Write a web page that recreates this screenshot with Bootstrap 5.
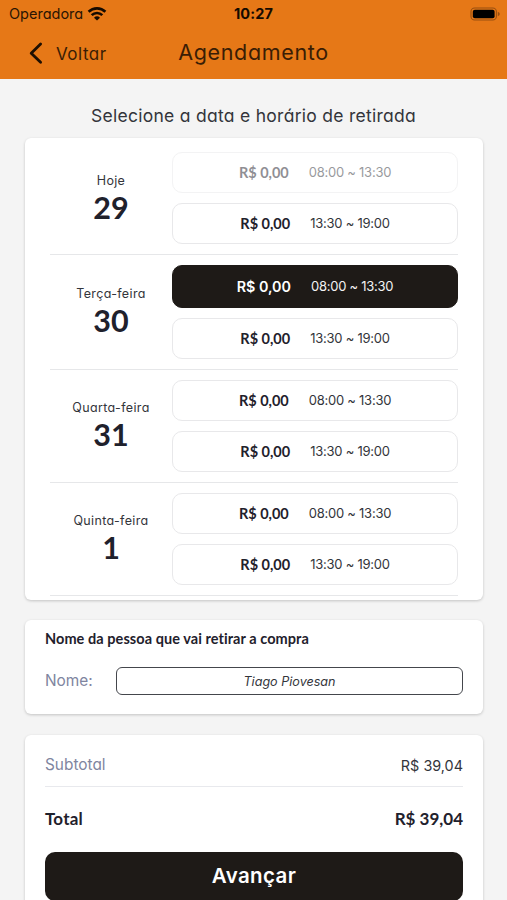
<!DOCTYPE html>
<html lang="pt-BR">
<head>
<meta charset="utf-8">
<meta name="viewport" content="width=device-width, initial-scale=1">
<title>Agendamento</title>
<link href="https://cdn.jsdelivr.net/npm/bootstrap@5.3.0/dist/css/bootstrap.min.css" rel="stylesheet">
<style>
  body { background: #f4f4f4; font-family: Inter, sans-serif; font-feature-settings: "cv11"; color: #33353b; height: 900px; overflow: hidden; line-height: 1.2; }
  .lato { font-family: Lato, sans-serif; font-weight: 700; color: #1f212c; }
  .topbar { background: #e67817; height: 79px; color: #3a1d05; }
  .statusbar { height: 28px; padding: 0 7px 0 9px; color: #2a1503; }
  .carrier { font-size: 14.5px; letter-spacing: 0; }
  .clock { font-size: 14.5px; font-weight: 700; color: #150a00; letter-spacing: .15px; }
  .navrow { height: 51px; padding-left: 28px; }
  .back-label { font-size: 17px; letter-spacing: .5px; padding-top: 1px; margin-left: 13px; }
  .screen-title { font-size: 21.5px; letter-spacing: .65px; margin-top: -1px; }
  .prompt { font-size: 17.5px; letter-spacing: .28px; height: 59px; padding-top: 26px; }
  .panel { background: #fff; border-radius: 6px; box-shadow: 0 1px 3px rgba(0,0,0,.2); margin: 0 24px 0 25px; }
  .schedule { height: 462px; padding: 4px 25px 0; }
  .day { border-bottom: 1.5px solid #e6e7e9; padding: 10px 0; }
  .day-name { width: 122px; }
  .weekday { font-size: 12.5px; letter-spacing: .35px; padding-top: 1px; }
  .daynum { font-size: 30.5px; line-height: 36px; margin-top: 1px; }
  .slots { row-gap: 10px; }
  .slot { height: 41px; border: 1.5px solid #e8e8ea; border-radius: 10px; gap: 20px; }
  .slot .lato { font-size: 14.5px; }
  .hours { font-size: 13px; letter-spacing: -.25px; }
  .slot.off { opacity: .5; }
  .slot.on { height: 42.8px; background: #1e1a17; border-color: #1e1a17; color: #f3f3f3; }
  .price-on { font-size: 14.3px; font-weight: 600; color: #fff; }
  .pickup { height: 94px; padding: 0 20px; margin-top: 20px; }
  .pickup-title { font-size: 14.5px; padding-top: 10px; letter-spacing: .06px; }
  .field-label { color: #7f85a0; font-size: 15.4px; }
  .name-field { height: 28px; width: 347px; border: 1.5px solid #44464c; border-radius: 6px; font-size: 12.6px; font-style: italic; }
  .summary { height: 185px; padding: 0 20px; margin-top: 21px; }
  .subtotal { height: 51.5px; padding-top: 10px; border-bottom: 1.5px solid #e8e9ed; }
  .amount { font-size: 14.4px; }
  .total { height: 65px; font-size: 17px; }
  .total span:first-child { letter-spacing: .2px; }
  .advance { height: 49px; background: #1e1a17; color: #fff; border-radius: 10px; font-size: 20.5px; font-weight: 600; letter-spacing: .4px; }
</style>
</head>
<body>
<header class="topbar">
  <div class="statusbar d-flex align-items-center justify-content-between position-relative">
    <div class="d-flex align-items-center gap-1">
      <span class="carrier">Operadora</span>
      <svg width="20" height="14" viewBox="0 0 20 14" fill="none" stroke="#150a00" stroke-width="2.6"><path d="M1.6 4.8a12 12 0 0 1 16.8 0M4.7 8.2a7.5 7.5 0 0 1 10.6 0"/><path d="M10 13.6 7 10.7a4.3 4.3 0 0 1 6 0z" fill="#150a00" stroke="none"/></svg>
    </div>
    <span class="clock position-absolute start-50 translate-middle-x">10:27</span>
    <svg width="31" height="14" viewBox="0 0 31 14"><rect x="2" y="1" width="25.4" height="12" rx="3.6" fill="none" stroke="#984f10" stroke-width="1.1"/><rect x="3.8" y="2.8" width="21.8" height="8.4" rx="2" fill="#000"/><path d="M28.8 4.8q2 .7 2 2.2t-2 2.2z" fill="#984f10"/></svg>
  </div>
  <div class="navrow d-flex align-items-center position-relative">
    <svg width="15" height="23" viewBox="0 0 15 23" fill="none" stroke="#1e0f02" stroke-width="2.8" stroke-linecap="round" stroke-linejoin="round"><path d="M12.6 2 3.2 11.2l9.4 9.1"/></svg>
    <span class="back-label">Voltar</span>
    <span class="screen-title position-absolute start-50 translate-middle-x">Agendamento</span>
  </div>
</header>
<main>
  <p class="prompt text-center m-0">Selecione a data e horário de retirada</p>
  <section class="panel schedule">
    <div class="day d-flex align-items-center">
      <div class="day-name text-center"><div class="weekday">Hoje</div><div class="daynum lato">29</div></div>
      <div class="flex-fill d-grid slots">
        <div class="slot off d-flex align-items-center justify-content-center"><span class="lato">R$ 0,00</span><span class="hours">08:00 ~ 13:30</span></div>
        <div class="slot d-flex align-items-center justify-content-center"><span class="lato">R$ 0,00</span><span class="hours">13:30 ~ 19:00</span></div>
      </div>
    </div>
    <div class="day d-flex align-items-center">
      <div class="day-name text-center"><div class="weekday">Terça-feira</div><div class="daynum lato">30</div></div>
      <div class="flex-fill d-grid slots">
        <div class="slot on d-flex align-items-center justify-content-center"><span class="price-on">R$ 0,00</span><span class="hours">08:00 ~ 13:30</span></div>
        <div class="slot d-flex align-items-center justify-content-center"><span class="lato">R$ 0,00</span><span class="hours">13:30 ~ 19:00</span></div>
      </div>
    </div>
    <div class="day d-flex align-items-center">
      <div class="day-name text-center"><div class="weekday">Quarta-feira</div><div class="daynum lato">31</div></div>
      <div class="flex-fill d-grid slots">
        <div class="slot d-flex align-items-center justify-content-center"><span class="lato">R$ 0,00</span><span class="hours">08:00 ~ 13:30</span></div>
        <div class="slot d-flex align-items-center justify-content-center"><span class="lato">R$ 0,00</span><span class="hours">13:30 ~ 19:00</span></div>
      </div>
    </div>
    <div class="day d-flex align-items-center">
      <div class="day-name text-center"><div class="weekday">Quinta-feira</div><div class="daynum lato">1</div></div>
      <div class="flex-fill d-grid slots">
        <div class="slot d-flex align-items-center justify-content-center"><span class="lato">R$ 0,00</span><span class="hours">08:00 ~ 13:30</span></div>
        <div class="slot d-flex align-items-center justify-content-center"><span class="lato">R$ 0,00</span><span class="hours">13:30 ~ 19:00</span></div>
      </div>
    </div>
  </section>
  <section class="panel pickup">
    <div class="pickup-title lato">Nome da pessoa que vai retirar a compra</div>
    <div class="d-flex align-items-center justify-content-between mt-3 pt-1">
      <span class="field-label">Nome:</span>
      <div class="name-field d-flex align-items-center justify-content-center">Tiago Piovesan</div>
    </div>
  </section>
  <section class="panel summary">
    <div class="subtotal d-flex align-items-center justify-content-between"><span class="field-label">Subtotal</span><span class="amount">R$ 39,04</span></div>
    <div class="total lato d-flex align-items-center justify-content-between"><span>Total</span><span>R$ 39,04</span></div>
    <button class="advance btn w-100 p-0 border-0" type="button">Avançar</button>
  </section>
</main>
<script src="https://cdn.jsdelivr.net/npm/bootstrap@5.3.0/dist/js/bootstrap.bundle.min.js"></script>
</body>
</html>
